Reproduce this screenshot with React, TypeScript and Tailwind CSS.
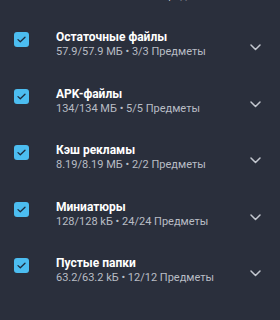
import React from 'react';

interface CleanItem {
  title: string;
  size: string;
  count: string;
}

const items: CleanItem[] = [
  { title: 'Кэш приложений', size: '2.16/2.16 ГБ', count: '89/89 Предметы' },
  { title: 'Остаточные файлы', size: '57.9/57.9 МБ', count: '3/3 Предметы' },
  { title: 'APK-файлы', size: '134/134 МБ', count: '5/5 Предметы' },
  { title: 'Кэш рекламы', size: '8.19/8.19 МБ', count: '2/2 Предметы' },
  { title: 'Миниатюры', size: '128/128 kБ', count: '24/24 Предметы' },
  { title: 'Пустые папки', size: '63.2/63.2 kБ', count: '12/12 Предметы' },
];

function CheckBox() {
  return (
    <div className="w-[15px] h-[15px] rounded-[3px] bg-[#4cbdf0] flex items-center justify-center shrink-0">
      <svg width="9" height="7" viewBox="0 0 9 7" fill="none">
        <path d="M1 3.6 L3.3 5.8 L8 1.2" stroke="#1d2b3d" strokeWidth="1.3" strokeLinecap="round" strokeLinejoin="round" />
      </svg>
    </div>
  );
}

function Chevron() {
  return (
    <svg width="11" height="7" viewBox="0 0 11 7" fill="none">
      <path d="M1 1 L5.5 5.5 L10 1" stroke="#c3c7cf" strokeWidth="1.5" strokeLinecap="round" strokeLinejoin="round" />
    </svg>
  );
}

const Row: React.FC<{ item: CleanItem }> = ({ item }) => {
  return (
    <div className="h-[56.5px] flex items-start pt-4 pl-[14px] pr-[16px]">
      <div className="mt-[3px]">
        <CheckBox />
      </div>
      <div className="ml-[27px] flex-1 min-w-0">
        <div className="text-[12px] leading-[16px] font-bold text-white">{item.title}</div>
        <div className="text-[11px] leading-[14px] text-[#b9bdc5]">
          {item.size} • {item.count}
        </div>
      </div>
      <div className="mt-[15px] mr-[3px]">
        <Chevron />
      </div>
    </div>
  );
};

export default function App() {
  return (
    <div className="w-[280px] h-[320px] overflow-hidden bg-[#2a2f3c]" style={{ fontFamily: 'Roboto, "Noto Sans", sans-serif' }}>
      <div className="-mt-[43.3px]">
        {items.map((item) => (
          <Row key={item.title} item={item} />
        ))}
      </div>
    </div>
  );
}
